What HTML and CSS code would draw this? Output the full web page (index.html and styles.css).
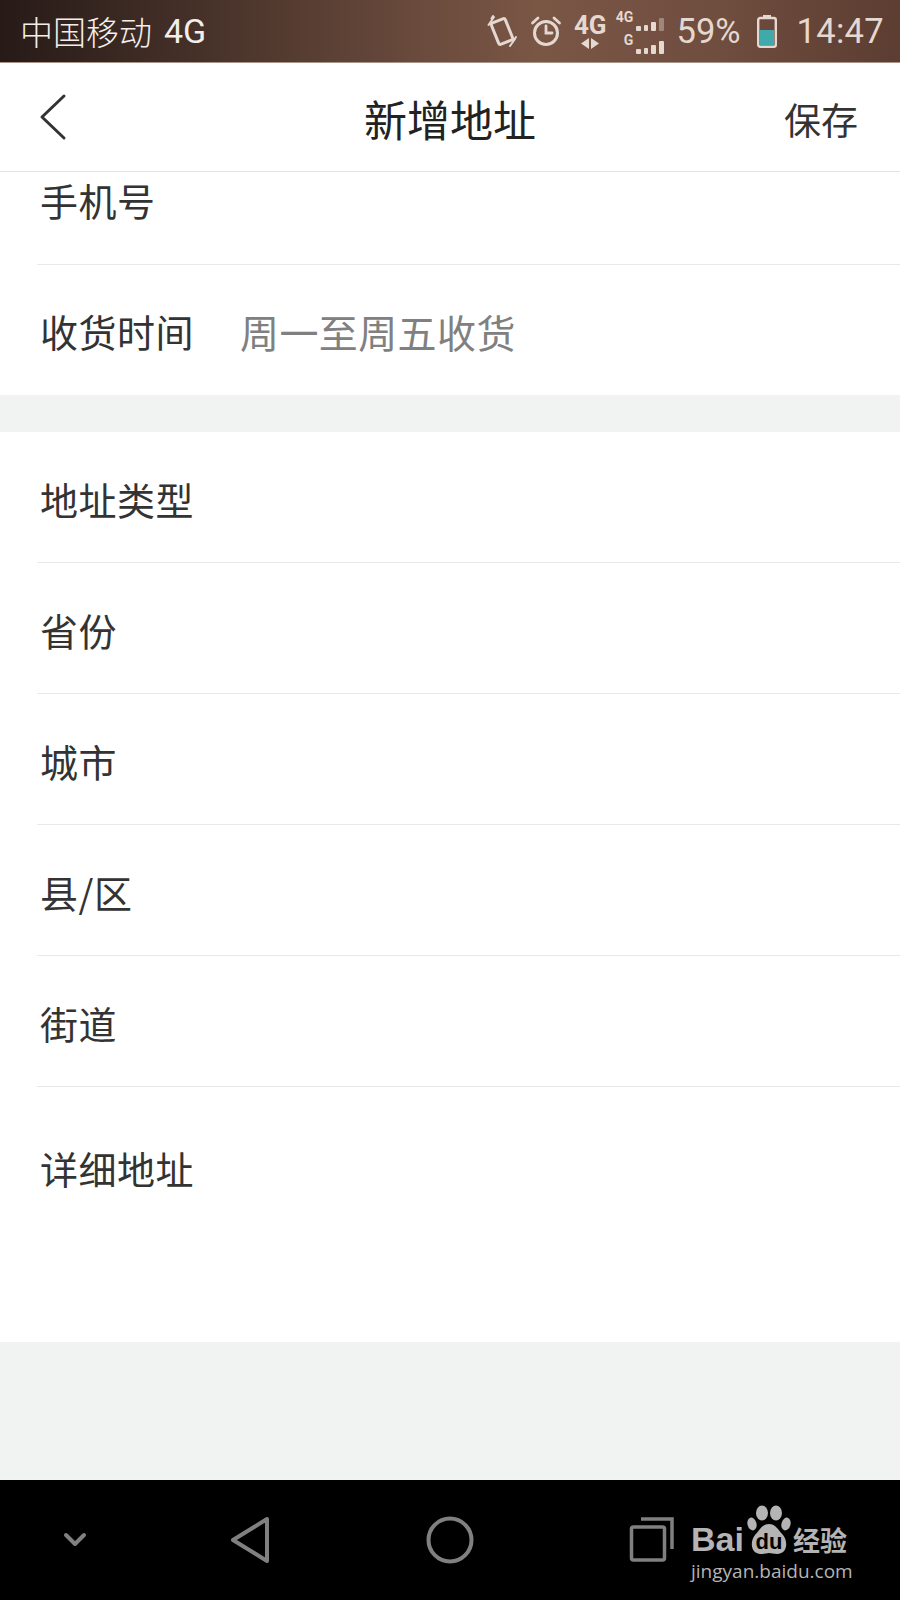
FILE: index.html
```html
<!DOCTYPE html>
<html lang="zh">
<head>
<meta charset="utf-8">
<title>新增地址</title>
<link rel="stylesheet" href="styles.css">
</head>
<body>
<div class="phone">
  <header class="status">
    <div class="carrier"><span class="carrier-name">中国移动</span><span class="carrier-net">4G</span></div>
    <div class="status-right">
      <svg class="ic-vibrate" width="32" height="32" viewBox="0 0 30 32" fill="none" stroke="#e5d8d0" stroke-linecap="round">
        <rect x="7.5" y="5" width="15" height="23" rx="2" transform="rotate(-22 15 16.500)" stroke-width="3"/>
        <path d="M1.5 10 7 2M4.500 3.500 6 1M23 31l5-7M27 25l2-3" stroke-width="2"/>
      </svg>
      <svg class="ic-alarm" width="32" height="32" viewBox="0 0 32 32" fill="none" stroke="#e5d8d0" stroke-linecap="round">
        <circle cx="16" cy="18" r="11.5" stroke-width="3"/>
        <path d="M16 11v7h6" stroke-width="2.800"/>
        <path d="M2.5 8 8 3M29.5 8 24 3" stroke-width="2.800"/>
      </svg>
      <div class="net">
        <span class="net-label">4G</span>
        <svg width="22" height="11" viewBox="0 0 22 11" fill="#e5d8d0"><path d="M10 0v11L2 5.5zM12 0l8 5.500-8 5.500z"/></svg>
      </div>
      <div class="signal">
        <div class="signal-row">
          <span class="sig-label">4G</span>
          <i class="bar b1"></i><i class="bar b2"></i><i class="bar b3"></i><i class="bar b4 dim"></i>
        </div>
        <div class="signal-row">
          <span class="sig-label">G</span>
          <i class="bar b1"></i><i class="bar b2"></i><i class="bar b3"></i><i class="bar b4"></i>
        </div>
      </div>
      <span class="percent">59%</span>
      <svg class="ic-battery" width="20" height="33" viewBox="0 0 20 33">
        <rect x="6" y="0" width="8" height="3" fill="#e5d8d0"/>
        <rect x="1.200" y="3" width="17.600" height="28.800" rx="2" fill="none" stroke="#e5d8d0" stroke-width="2.400"/>
        <rect x="3" y="15" width="14" height="15" fill="#3fa9ab"/>
      </svg>
      <span class="clock">14:47</span>
    </div>
  </header>

  <nav class="nav">
    <svg class="back" width="28" height="48" viewBox="0 0 28 48" fill="none" stroke="#333" stroke-width="3" stroke-linecap="round" stroke-linejoin="round"><path d="M25 3 3 24l22 21"/></svg>
    <h1 class="title">新增地址</h1>
    <span class="save">保存</span>
  </nav>

  <main class="content">
    <section class="group">
      <div class="row row-first"><span class="label">手机号</span></div>
      <div class="row row-last"><span class="label">收货时间</span><span class="value">周一至周五收货</span></div>
    </section>
    <section class="group">
      <div class="row"><span class="label">地址类型</span></div>
      <div class="row"><span class="label">省份</span></div>
      <div class="row"><span class="label">城市</span></div>
      <div class="row"><span class="label">县/区</span></div>
      <div class="row"><span class="label">街道</span></div>
      <div class="row row-last row-tall"><span class="label">详细地址</span></div>
    </section>
  </main>

  <footer class="softkeys">
    <svg width="24" height="16" viewBox="0 0 24 16" fill="none" stroke="#808080" stroke-width="4" stroke-linecap="round" stroke-linejoin="round"><path d="M3 3l9 9 9-9"/></svg>
    <svg width="40" height="48" viewBox="0 0 40 48" fill="none" stroke="#808080" stroke-width="4" stroke-linejoin="round"><path d="M37 3v42L3 24z"/></svg>
    <svg width="48" height="48" viewBox="0 0 48 48" fill="none" stroke="#808080" stroke-width="4"><circle cx="24" cy="24" r="21.500"/></svg>
    <svg class="ic-recent" width="46" height="46" viewBox="0 0 46 46" fill="none" stroke="#808080" stroke-width="3.500"><rect x="3.500" y="10" width="33" height="33" rx="2"/><path d="M13 2h31v30"/></svg>
  </footer>

  <div class="watermark">
    <div class="wm-top">
      <span class="wm-bai">Bai</span>
      <div class="wm-paw">
        <svg width="44" height="50" viewBox="0 0 44 50" fill="#b4b4b4">
          <ellipse cx="15" cy="8" rx="6" ry="7.500"/>
          <ellipse cx="29" cy="8" rx="6" ry="7.500"/>
          <ellipse cx="5" cy="19" rx="4.500" ry="6.500" transform="rotate(-15 5 19)"/>
          <ellipse cx="39" cy="19" rx="4.500" ry="6.500" transform="rotate(15 39 19)"/>
          <path d="M22 19c7 0 9 6 14 11 5 6 5 19-6 19-3 0-6-1-8-1s-5 1-8 1C3 49 3 36 8 30c5-5 7-11 14-11z"/>
        </svg>
        <span class="wm-du">du</span>
      </div>
      <span class="wm-jy">经验</span>
    </div>
    <span class="wm-url">jingyan.baidu.com</span>
  </div>
</div>
</body>
</html>
```

FILE: styles.css
```css
* { box-sizing: border-box; }

html, body {
  margin: 0;
  padding: 0;
}

body {
  font-family: "Noto Sans CJK SC", "Noto Sans", sans-serif;
  background: #f1f3f2;
}

.phone {
  position: relative;
  width: 900px;
  height: 1600px;
  display: flex;
  flex-direction: column;
  overflow: hidden;
  background: #f1f3f2;
}

/* status bar */
.status {
  flex: none;
  height: 63px;
  padding: 0 16px 0 20px;
  display: flex;
  align-items: center;
  justify-content: space-between;
  background: linear-gradient(90deg, #271a17 0%, #4a342b 25%, #6c4c3e 48%, #7a5645 60%, #6f4d3f 80%, #5c3d31 100%);
  border-bottom: 1px solid #a89488;
  color: #e5d8d0;
}

.carrier {
  display: flex;
  align-items: center;
  gap: 12px;
  color: #f3eeea;
}

.carrier-name {
  font-size: 33px;
  line-height: 40px;
  font-weight: 300;
}

.carrier-net {
  font-family: Roboto, "Liberation Sans", sans-serif;
  font-size: 34px;
  line-height: 40px;
}

.status-right {
  display: flex;
  align-items: center;
}

.ic-vibrate { margin-right: 12px; }
.ic-alarm { margin-right: 12px; }

.net {
  display: flex;
  flex-direction: column;
  align-items: center;
  margin-right: 7px;
}

.net-label {
  font-family: Roboto, "Liberation Sans", sans-serif;
  font-weight: 700;
  font-size: 26px;
  line-height: 25px;
}

.signal {
  display: flex;
  flex-direction: column;
  gap: 1px;
  width: 52px;
  margin-right: 11px;
}

.signal-row {
  position: relative;
  height: 22px;
  display: flex;
  align-items: flex-end;
  justify-content: flex-end;
  gap: 3px;
  padding-right: 2px;
}

.sig-label {
  margin-right: auto;
  width: 22px;
  text-align: right;
  font-family: Roboto, "Liberation Sans", sans-serif;
  font-weight: 700;
  font-size: 14px;
  line-height: 16px;
  align-self: flex-start;
}

.bar {
  display: block;
  width: 5px;
  background: #e5d8d0;
  border-radius: 1px;
}

.b1 { height: 5px; }
.b2 { height: 6px; }
.b3 { height: 9px; }
.b4 { height: 13px; }
.dim { opacity: 0.4; }

.percent {
  font-family: Roboto, "Liberation Sans", sans-serif;
  font-size: 34.500px;
  line-height: 40px;
  margin-right: 16px;
}

.ic-battery { margin-right: 20px; }

.clock {
  font-family: Roboto, "Liberation Sans", sans-serif;
  font-size: 34.500px;
  line-height: 40px;
  letter-spacing: 0.300px;
}

/* nav */
.nav {
  position: relative;
  flex: none;
  height: 109px;
  padding: 0 42px 0 39px;
  display: flex;
  align-items: center;
  justify-content: space-between;
  background: #fff;
  border-bottom: 1px solid #e4e4e4;
}

.back { margin-top: 0; }

.title {
  margin: 2px 0 0;
  flex: 1;
  text-align: center;
  font-size: 43px;
  line-height: 60px;
  font-weight: 400;
  color: #222;
  padding-left: 49px;
}

.save {
  margin-top: 3px;
  font-size: 37px;
  line-height: 60px;
  color: #333;
}

/* form */
.content {
  flex: 1;
  display: flex;
  flex-direction: column;
  gap: 37px;
  min-height: 0;
}

.group {
  background: #fff;
  padding-left: 37px;
}

.row {
  height: 131px;
  padding-left: 3px;
  padding-top: 3px;
  display: flex;
  align-items: center;
  border-bottom: 1px solid #e8e8e8;
}

.row-first {
  height: 93px;
  padding-top: 0;
  padding-bottom: 37px;
}

.row-last {
  border-bottom: 0;
  height: 130px;
  padding-top: 1px;
}

.row-tall {
  height: 255px;
  align-items: flex-start;
  padding-top: 54px;
}

.label {
  width: 200px;
  font-size: 38px;
  letter-spacing: 0.500px;
  line-height: 54px;
  color: #333;
}

.value {
  font-size: 39px;
  letter-spacing: 0.400px;
  line-height: 54px;
  color: #808080;
}

/* soft keys */
.softkeys {
  flex: none;
  height: 120px;
  display: grid;
  grid-template-columns: 150px 200px 200px 200px;
  justify-items: center;
  align-items: center;
  background: #000;
}

.ic-recent { margin-left: 1px; }

/* watermark over the soft keys */
.watermark {
  position: absolute;
  left: 691px;
  top: 1505px;
  width: 164px;
  color: #b4b4b4;
}

.wm-top {
  display: flex;
  align-items: flex-end;
  height: 50px;
}

.wm-bai {
  font-family: "Liberation Sans", sans-serif;
  font-weight: 700;
  font-size: 34px;
  line-height: 32px;
}

.wm-paw {
  position: relative;
  width: 44px;
  height: 50px;
  margin-left: 3px;
}

.wm-paw svg { display: block; }

.wm-du {
  position: absolute;
  left: 0;
  right: 0;
  bottom: 3px;
  text-align: center;
  font-family: "Liberation Sans", sans-serif;
  font-weight: 700;
  font-size: 22px;
  line-height: 20px;
  color: #000;
}

.wm-jy {
  font-weight: 700;
  font-size: 27px;
  line-height: 30px;
  margin-left: 2px;
}

.wm-url {
  display: block;
  margin-top: 3px;
  font-family: "Open Sans", "Liberation Sans", sans-serif;
  font-size: 19px;
  line-height: 26px;
  white-space: nowrap;
}
```
